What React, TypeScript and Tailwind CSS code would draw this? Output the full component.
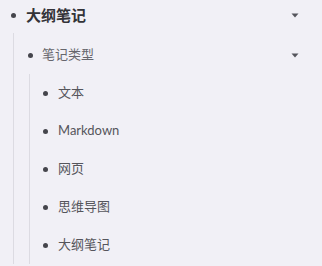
const items = ["文本", "Markdown", "网页", "思维导图", "大纲笔记"];

const Caret = () => (
  <svg width="8" height="5" viewBox="0 0 8 5" className="shrink-0">
    <path d="M0.5 0.5 L7.5 0.5 L4 4.5 Z" fill="#55555c" />
  </svg>
);

const Bullet = () => <span className="w-[5px] h-[5px] rounded-full bg-[#45454c] shrink-0" />;

export default function App() {
  return (
    <div
      className="w-[322px] h-[266px] overflow-hidden bg-[#f1f0f6]"
      style={{ fontFamily: "Lato, 'Noto Sans CJK SC', sans-serif" }}
    >
      {/* level 1 */}
      <div className="flex items-center h-[30px] pl-[11px] pr-[23px]">
        <Bullet />
        <span className="ml-[10px] text-[15px] font-bold text-[#333338] flex-1">大纲笔记</span>
        <Caret />
      </div>
      <div className="ml-[13px] border-l border-[#dcdbe2] mt-[3px]">
        {/* level 2 */}
        <div className="flex items-center h-[41px] pt-[3px] pl-[14px] pr-[23px]">
          <Bullet />
          <span className="ml-[9px] text-[13px] text-[#66666c] flex-1">笔记类型</span>
          <Caret />
        </div>
        <div className="ml-[15px] border-l border-[#dcdbe2]">
          {items.map((item) => (
            <div key={item} className="flex items-center h-[38px] pl-[13px]">
              <Bullet />
              <span className="ml-[10px] text-[13px] text-[#55555b]">{item}</span>
            </div>
          ))}
        </div>
      </div>
    </div>
  );
}
